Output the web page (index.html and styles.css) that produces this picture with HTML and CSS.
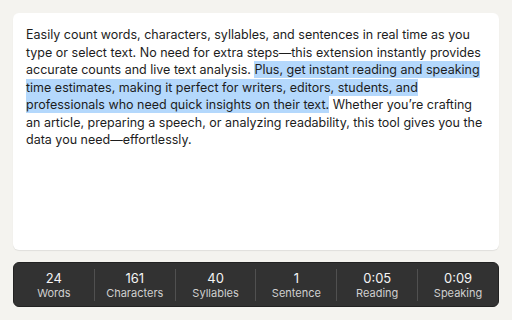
FILE: index.html
```html
<!DOCTYPE html>
<html lang="en">
<head>
    <meta charset="UTF-8">
    <meta name="viewport" content="width=device-width, initial-scale=1.0">
    <title>Word Counter</title>
    <link rel="stylesheet" href="styles.css">
</head>
<body>

    <div class="editor">
        <p class="editor-text">Easily count words, characters, syllables, and sentences in real time as you type or select text. No need for extra steps—this extension instantly provides accurate counts and live text analysis. <span class="selected">Plus, get instant reading and speaking time estimates, making it perfect for writers, editors, students, and professionals who need quick insights on their text.</span> Whether you’re crafting an article, preparing a speech, or analyzing readability, this tool gives you the data you need—effortlessly.</p>
    </div>

    <div class="stats">
        <div class="stat">
            <div class="stat-value">24</div>
            <div class="stat-label">Words</div>
        </div>
        <div class="stat">
            <div class="stat-value">161</div>
            <div class="stat-label">Characters</div>
        </div>
        <div class="stat">
            <div class="stat-value">40</div>
            <div class="stat-label">Syllables</div>
        </div>
        <div class="stat">
            <div class="stat-value">1</div>
            <div class="stat-label">Sentence</div>
        </div>
        <div class="stat">
            <div class="stat-value">0:05</div>
            <div class="stat-label">Reading</div>
        </div>
        <div class="stat">
            <div class="stat-value">0:09</div>
            <div class="stat-label">Speaking</div>
        </div>
    </div>

</body>
</html>
```

FILE: styles.css
```css
body {
    font-family: Inter, "Noto Sans", sans-serif;
    margin: 0;
    padding: 13px;
    background-color: #f4f3ef;
    display: flex;
    flex-direction: column;
    gap: 12px;
    height: 320px;
    box-sizing: border-box;
}

.editor {
    height: 237px;
    background: white;
    border-radius: 6px;
    box-shadow: 0 1px 1px rgba(0, 0, 0, 0.08);
    padding: 13px;
    box-sizing: border-box;
}

.editor-text {
    margin: 0;
    font-size: 12.5px;
    line-height: 17.5px;
    color: #1d1d1d;
}

.selected {
    background-color: #b4d8fc;
    padding: 1px 0;
}

.stats {
    display: flex;
    height: 45px;
    background-color: #323232;
    border: 1px solid #222;
    border-radius: 6px;
    box-sizing: border-box;
    align-items: center;
    padding: 6px 0 5px;
}

.stat {
    flex: 1;
    text-align: center;
    border-left: 1px solid #505050;
    height: 100%;
    display: flex;
    flex-direction: column;
    justify-content: center;
    padding-top: 1px;
    box-sizing: border-box;
}

.stat:first-child {
    border-left: none;
}

.stat-value {
    color: #f4f4f4;
    font-size: 13px;
    line-height: 15px;
}

.stat-label {
    color: #cfcfcf;
    font-size: 11px;
    line-height: 15px;
}
```
